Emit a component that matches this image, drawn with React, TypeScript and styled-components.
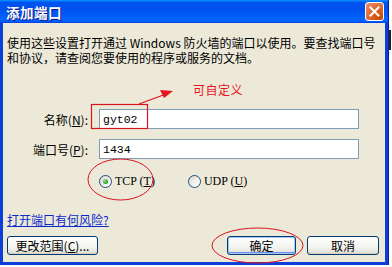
import * as React from "react";
import styled, { createGlobalStyle } from "styled-components";

const cjk = `"Noto Sans CJK SC", "Noto Sans", sans-serif`;

const GlobalStyle = createGlobalStyle`
  html, body {
    margin: 0;
    padding: 0;
    background: #ffffff;
  }
  body {
    width: 392px;
    height: 267px;
    overflow: hidden;
    font-family: ${cjk};
  }
`;

const Stage = styled.div`
  position: relative;
  width: 392px;
  height: 267px;
`;

const Window = styled.div`
  width: 389px;
  height: 265px;
  box-sizing: border-box;
  display: flex;
  flex-direction: column;
  background: #0a3fd8;
  padding: 0 3px 3px 3px;
  border-right: 1px solid #0022a8;
`;

const TitleBar = styled.div`
  height: 23px;
  margin: 0 -3px;
  padding: 0 4px 0 6px;
  display: flex;
  align-items: center;
  justify-content: space-between;
  background: linear-gradient(
    to bottom,
    #0997ff 0%,
    #0053ee 10%,
    #0050ee 40%,
    #0066ff 86%,
    #005bff 93%,
    #003dd7 100%
  );
`;

const Title = styled.span`
  color: #ffffff;
  font-family: ${cjk};
  font-weight: 700;
  font-size: 13.5px;
  letter-spacing: 0.5px;
  text-shadow: 1px 1px #0f1089;
`;

const CloseButton = styled.div`
  width: 19px;
  height: 19px;
  box-sizing: border-box;
  border: 1px solid #ffffff;
  border-radius: 3px;
  background: radial-gradient(circle at 80% 85%, #cc4600 0%, #dc6527 45%, #e5805a 80%, #f0a080 100%);
  display: flex;
  align-items: center;
  justify-content: center;
`;

const Body = styled.div`
  flex: 1;
  background: #ece9d8;
  padding: 12px 6px 0 4px;
  display: flex;
  flex-direction: column;
`;

const Description = styled.div`
  font-size: 12px;
  line-height: 15px;
  color: #000000;
  white-space: nowrap;
`;

const FormGrid = styled.div`
  margin-top: 44px;
  display: grid;
  grid-template-columns: 81px 260px;
  column-gap: 11px;
  row-gap: 10px;
  align-items: center;
`;

const Label = styled.label`
  font-size: 12px;
  text-align: right;
  color: #000000;
  white-space: nowrap;
`;

const TextInput = styled.div`
  height: 20px;
  box-sizing: border-box;
  border: 1px solid #7f9db9;
  background: #ffffff;
  padding: 0 3px;
  display: flex;
  align-items: center;
  font-family: "Liberation Mono", "DejaVu Sans Mono", monospace;
  font-size: 11.5px;
  color: #000000;
`;

const RadioRow = styled.div`
  margin-top: 16px;
  padding-left: 92px;
  display: flex;
  align-items: center;
  gap: 33px;
`;

const RadioItem = styled.div`
  display: flex;
  align-items: center;
  gap: 3px;
  font-size: 12px;
  line-height: 13px;
  font-family: "Liberation Serif", ${cjk};
`;

const RadioCircle = styled.span<{ $checked?: boolean }>`
  width: 13px;
  height: 13px;
  box-sizing: border-box;
  border-radius: 50%;
  border: 1px solid #1c5180;
  background: linear-gradient(135deg, #dcd8cb 0%, #f4f3ee 60%, #ffffff 100%);
  display: flex;
  align-items: center;
  justify-content: center;

  &::after {
    content: "";
    display: ${(p) => (p.$checked ? "block" : "none")};
    width: 5px;
    height: 5px;
    border-radius: 50%;
    background: radial-gradient(circle at 35% 35%, #8de38d 0%, #21a121 70%, #1a8a1a 100%);
  }
`;

const Link = styled.a`
  margin-top: 25px;
  align-self: flex-start;
  font-size: 12px;
  line-height: 14px;
  color: #0c2bcb;
  text-decoration: underline;
  cursor: pointer;
`;

const ButtonRow = styled.div`
  margin-top: 9px;
  display: flex;
  align-items: center;
`;

const Spacer = styled.div`
  flex: 1;
`;

const Button = styled.button<{ $width: number; $default?: boolean }>`
  width: ${(p) => p.$width}px;
  height: 19px;
  box-sizing: border-box;
  border: 1px solid #003c74;
  border-radius: 3px;
  background: linear-gradient(to bottom, #ffffff 0%, #f3f3ef 60%, #e6e4dc 88%, #d6d0c5 100%);
  box-shadow: ${(p) =>
    p.$default
      ? "inset 0 0 0 1px #a8c6f5, inset 0 -1px 0 1px #6d8fe8"
      : "inset 0 -1px 0 #d6d0c5"};
  font-family: ${cjk};
  font-size: 12px;
  line-height: 15px;
  color: #000000;
  padding: 0;
  & + & {
    margin-left: 11px;
  }
`;

const BottomStrip = styled.div`
  height: 2px;
  background: #ffffff;
`;

const Annotations = styled.svg`
  position: absolute;
  left: 0;
  top: 0;
  pointer-events: none;
`;

const Note = styled.span`
  position: absolute;
  left: 193px;
  top: 83px;
  font-size: 12px;
  line-height: 14px;
  color: #e8141e;
  letter-spacing: 0.5px;
`;

const RightEdge = styled.div`
  position: absolute;
  left: 389px;
  top: 30px;
  width: 2px;
  height: 20px;
  background: #222222;
`;

export default function App() {
  return (
    <Stage>
      <GlobalStyle />
      <Window>
        <TitleBar>
          <Title>添加端口</Title>
          <CloseButton>
            <svg width="11" height="11" viewBox="0 0 11 11">
              <path d="M1.5 1.5 L9.5 9.5 M9.5 1.5 L1.5 9.5" stroke="#ffffff" strokeWidth="2" strokeLinecap="square" />
            </svg>
          </CloseButton>
        </TitleBar>
        <Body>
          <Description>
            使用这些设置打开通过 Windows 防火墙的端口以使用。要查找端口号
            <br />
            和协议，请查阅您要使用的程序或服务的文档。
          </Description>
          <FormGrid>
            <Label>
              名称(<u>N</u>):
            </Label>
            <TextInput>gyt02</TextInput>
            <Label>
              端口号(<u>P</u>):
            </Label>
            <TextInput>1434</TextInput>
          </FormGrid>
          <RadioRow>
            <RadioItem>
              <RadioCircle $checked />
              <span>
                TCP (<u>T</u>)
              </span>
            </RadioItem>
            <RadioItem>
              <RadioCircle />
              <span>
                UDP (<u>U</u>)
              </span>
            </RadioItem>
          </RadioRow>
          <Link>打开端口有何风险?</Link>
          <ButtonRow>
            <Button $width={91}>
              更改范围(<u>C</u>)...
            </Button>
            <Spacer />
            <Button $width={69} $default>
              确定
            </Button>
            <Button $width={72}>取消</Button>
          </ButtonRow>
        </Body>
      </Window>
      <BottomStrip />
      <RightEdge />
      <Note>可自定义</Note>
      <Annotations width="392" height="267" viewBox="0 0 392 267">
        <rect x="91.5" y="104.5" width="56" height="24" fill="none" stroke="#d9141e" strokeWidth="1.2" />
        <line x1="139" y1="104" x2="166" y2="94" stroke="#d9141e" strokeWidth="1.2" />
        <polygon points="173,91 160,90 164,98" fill="#e8141e" />
        <ellipse cx="120.5" cy="179.5" rx="32.5" ry="20.5" fill="none" stroke="#d9141e" strokeWidth="1" />
        <ellipse cx="257.5" cy="245.5" rx="45.5" ry="17.5" fill="none" stroke="#d9141e" strokeWidth="1" />
      </Annotations>
    </Stage>
  );
}
